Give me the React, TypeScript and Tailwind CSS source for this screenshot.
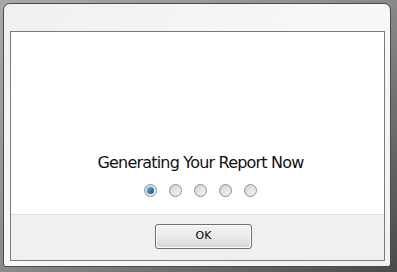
export default function App() {
  const dots = [0, 1, 2, 3, 4];
  return (
    <div className="w-[397px] h-[272px] bg-gradient-to-br from-[#a8a8a8] via-[#8a8a8a] to-[#4a4a4a] pt-[3px] pl-[3px] pr-[6px] pb-[5px] font-['Liberation_Sans',sans-serif]">
      <div className="h-full w-full rounded-t-[7px] rounded-b-[3px] border border-[#4b4b4b] bg-gradient-to-br from-[#f0f0f0] via-[#f8f8f8] to-[#f1f1f1] pt-[27px] pl-[6px] pr-[5px] pb-[5px] flex">
        <div className="flex-1 flex flex-col border border-[#7a7a7a] bg-white">
          <div className="h-[182px] flex flex-col items-center justify-end pb-[17px] pl-[6px]">
            <p className="text-[16px] leading-[20px] text-[#111] font-['DejaVu_Sans',sans-serif] tracking-[-0.8px] mb-[11px]">
              Generating Your Report Now
            </p>
            <div className="flex gap-[12px]">
              {dots.map((i) => (
                <span
                  key={i}
                  className="w-[13px] h-[13px] rounded-full border border-[#8e8f8f] bg-gradient-to-br from-[#cfcfcf] to-[#f4f4f4] flex items-center justify-center"
                >
                  {i === 0 ? (
                    <span className="w-[7px] h-[7px] rounded-full bg-gradient-to-br from-[#5fb8e8] to-[#0b4f8c]" />
                  ) : (
                    <span className="w-[7px] h-[7px] rounded-full bg-gradient-to-br from-[#d9d9d9] to-[#f2f2f2]" />
                  )}
                </span>
              ))}
            </div>
          </div>
          <div className="flex-1 bg-[#f0f0f0] border-t border-[#dfdfdf] flex justify-center pt-[9px] pl-[12px]">
            <button
              type="button"
              className="w-[97px] h-[25px] rounded-[3px] border border-[#707070] bg-gradient-to-b from-[#f2f2f2] via-[#ebebeb] to-[#d6d6d6] text-[11px] text-black font-['DejaVu_Sans',sans-serif] shadow-[inset_0_0_0_1px_#fcfcfc]"
            >
              OK
            </button>
          </div>
        </div>
      </div>
    </div>
  );
}
